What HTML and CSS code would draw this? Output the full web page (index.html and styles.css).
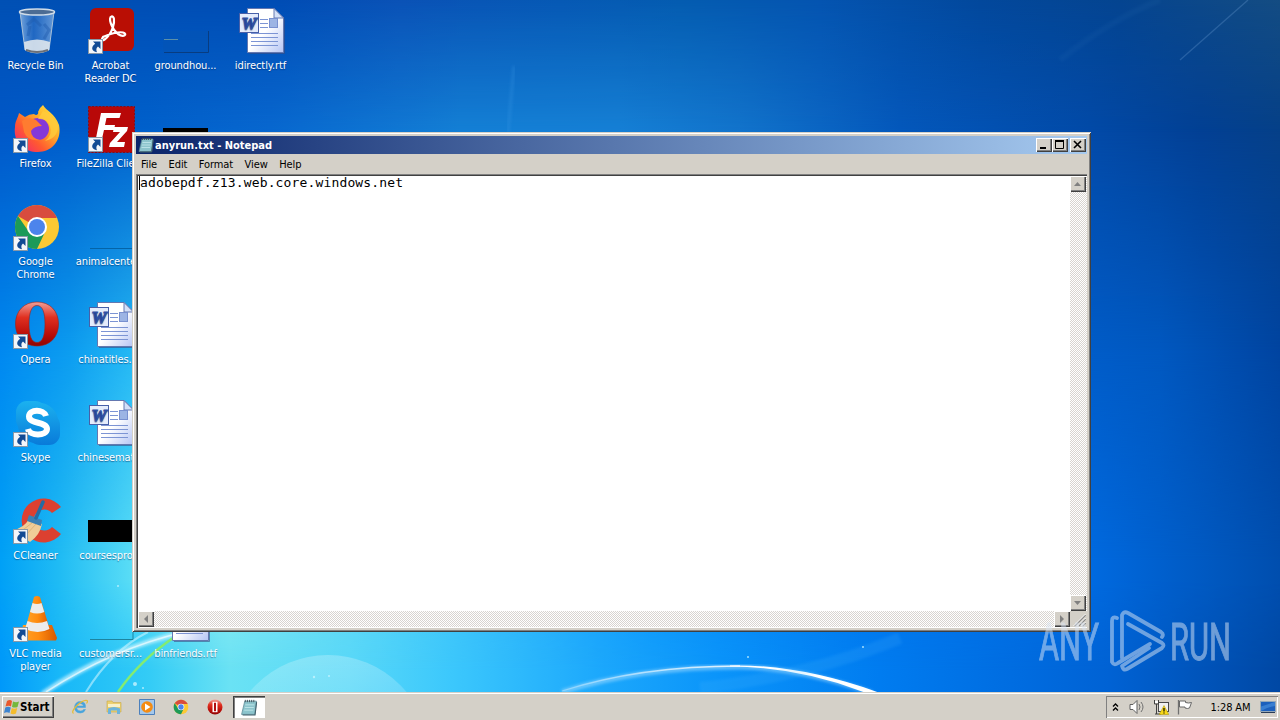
FILE: index.html
```html
<!DOCTYPE html>
<html lang="en">

<head>
  <meta charset="UTF-8">
  <meta name="viewport" content="width=device-width, initial-scale=1.0">
  <title>Desktop</title>
  <link rel="stylesheet" href="styles.css">
</head>

<body>
  <!-- shared icon shapes -->
  <svg class="defs" width="0" height="0">
    <defs>
      <linearGradient id="page" x1="0" y1="0" x2="1" y2="1">
        <stop offset=".5" stop-color="#fff" />
        <stop offset="1" stop-color="#b4c4f4" />
      </linearGradient>
      <linearGradient id="red" x1="0" y1="0" x2="0" y2="1">
        <stop offset="0" stop-color="#f0a098" />
        <stop offset=".35" stop-color="#e03020" />
        <stop offset=".75" stop-color="#b80c08" />
        <stop offset="1" stop-color="#8c0404" />
      </linearGradient>
      <linearGradient id="fox" x1="1" y1="0" x2="0" y2="1">
        <stop offset="0" stop-color="#fff04c" />
        <stop offset=".35" stop-color="#ffb028" />
        <stop offset=".65" stop-color="#ff5a30" />
        <stop offset="1" stop-color="#f01880" />
      </linearGradient>
      <linearGradient id="skype" x1="0" y1="0" x2="0" y2="48" gradientUnits="userSpaceOnUse">
        <stop offset="0" stop-color="#1cb4f0" />
        <stop offset="1" stop-color="#0878d8" />
      </linearGradient>
      <linearGradient id="glass" x1="0" y1="0" x2="1" y2="0">
        <stop offset="0" stop-color="#b8d4f0" stop-opacity=".65" />
        <stop offset=".4" stop-color="#5088d0" stop-opacity=".4" />
        <stop offset="1" stop-color="#a8c8ec" stop-opacity=".6" />
      </linearGradient>
      <linearGradient id="cone" x1="0" y1="0" x2="1" y2="0">
        <stop offset="0" stop-color="#ffa428" />
        <stop offset=".5" stop-color="#ff8c10" />
        <stop offset="1" stop-color="#d85800" />
      </linearGradient>

      <symbol id="shortcut" viewBox="0 0 15 15">
        <rect x=".5" y=".5" width="14" height="14" fill="#f4f6fa" stroke="#8898a8" />
        <path d="M5 2.500h7.500V10L10 7.500C8 9 8 11 9 13.300 3.500 12.500 2.500 8 7.200 4.800z" fill="#124a94" />
      </symbol>

      <symbol id="word" viewBox="0 0 50 48">
        <path d="M11.500 1.500H38l9.500 9.500V45.500h-36z" fill="url(#page)" stroke="#6478b0" />
        <path d="M38 1.500V11h9.500z" fill="#d4e0f8" stroke="#6478b0" />
        <path d="M48.500 12v34.500H13" fill="none" stroke="#3c4c80" opacity=".6" />
        <path d="M24 12.500h8M24 16.500h8M24 20.500h8M15 26.500h27M15 30.500h27M15 34.500h27M15 38.500h27" stroke="#7c94d4" />
        <rect x="33.500" y="11.500" width="8" height="9" fill="#9cb4e4" stroke="#7890d0" />
        <rect x="3.500" y="6.500" width="19" height="19" fill="#e4ecfc" stroke="#4860a8" />
        <text x="13" y="21.500" text-anchor="middle" textLength="15" lengthAdjust="spacingAndGlyphs" class="word-letter">W</text>
      </symbol>

      <symbol id="chrome" viewBox="0 0 48 48">
        <circle cx="24" cy="24" r="22" fill="#fcc934" />
        <path d="M24 24L4.950 13A22 22 0 0 1 43.050 13L43.700 15H24z" fill="#d84c3e" />
        <path d="M4.950 13A22 22 0 0 0 24 46L32 29 24 33 16 29z" fill="#1c9a58" />
        <circle cx="24" cy="24" r="10" fill="#fff" />
        <circle cx="24" cy="24" r="8" fill="#4c84ec" />
      </symbol>

      <symbol id="opera" viewBox="0 0 48 48">
        <path fill-rule="evenodd" fill="url(#red)" stroke="#9c2018" stroke-width=".6" d="M24 2C11 2 2.500 11 2.500 24S11 46 24 46s21.500-9 21.500-22S37 2 24 2zm0 3.500c5.500 0 8 7 8 18.500s-2.500 18.500-8 18.500-8-7-8-18.500 2.500-18.500 8-18.500z" />
      </symbol>

      <symbol id="notepad" viewBox="0 0 16 16">
        <path d="M4 2h11l-1.500 12.500H1z" fill="#8cc4cc" stroke="#5c8894" stroke-width=".7" />
        <path d="M15.200 3l-1.500 12H2" fill="none" stroke="#40606c" />
        <path d="M4.500 5.500h8.500M4 8h8.500M3.500 10.500h8.500" stroke="#c4e8ec" stroke-width=".8" />
        <path d="M4.500 3V.8M6.500 3V.8M8.500 3V.8M10.500 3V.8M12.500 3V.8" stroke="#384850" stroke-width=".8" />
      </symbol>
    </defs>
  </svg>

  <main class="desktop">
    <div class="sky sky-floor"></div>
    <div class="sky sky-low"></div>
    <div class="sky sky-mid"></div>
    <div class="sky sky-high"></div>
    <div class="sky sky-top"></div>
    <svg class="sky streaks" viewBox="0 0 1280 692">
      <defs>
        <filter id="soft"><feGaussianBlur stdDeviation="1.500" /></filter>
        <linearGradient id="dome" x1="0" y1="0" x2="0" y2="1">
          <stop offset="0" stop-color="#fff" stop-opacity=".24" />
          <stop offset=".5" stop-color="#fff" stop-opacity=".05" />
        </linearGradient>
        <linearGradient id="arc" x1="560" y1="0" x2="880" y2="0" gradientUnits="userSpaceOnUse">
          <stop offset="0" stop-color="#fff" stop-opacity=".35" />
          <stop offset=".5" stop-color="#fff" />
          <stop offset="1" stop-color="#fff" />
        </linearGradient>
      </defs>
      <circle cx="328" cy="757" r="102" fill="url(#dome)" />
      <path d="M42 694Q110 648 186 632" fill="none" stroke="#d8f8ff" stroke-width="5" filter="url(#soft)" opacity=".7" />
      <path d="M46 692Q112 649 184 632" fill="none" stroke="#fff" stroke-width="1.500" opacity=".6" />
      <path d="M86 692Q112 650 148 632" fill="none" stroke="#c8f4ff" stroke-width="2" opacity=".6" />
      <path d="M118 692Q140 660 176 636" fill="none" stroke="#84ec70" stroke-width="2.500" />
      <path d="M562 692Q640 667 740 667 800 668 872 693" fill="none" stroke="#a4dcff" stroke-width="5" filter="url(#soft)" opacity=".55" />
      <path d="M562 691Q640 666 740 666" fill="none" stroke="url(#arc)" stroke-width="1.300" opacity=".8" />
      <path d="M730 665.500Q800 664 880 693L866 693Q800 667 730 666.500z" fill="#fff" />
      <path d="M700 688Q810 676 900 638" fill="none" stroke="#5cc0ff" stroke-width="12" filter="url(#soft)" opacity=".14" />
      <path d="M1180 60L1248 0" stroke="#78a8dc" stroke-width="1.300" opacity=".28" />
      <path d="M1060 60Q1110 20 1160 0" fill="none" stroke="#3c80c0" stroke-width="6" filter="url(#soft)" opacity=".09" />
      <path d="M514 66L508 132" stroke="#3c98e4" stroke-width="3" opacity=".3" filter="url(#soft)" />
      <g fill="#c8f4ff" opacity=".8">
        <circle cx="118" cy="586" r="1" /><circle cx="135" cy="684" r="2" /><circle cx="143" cy="688" r="1" />
        <circle cx="314" cy="677" r="1.200" /><circle cx="329" cy="676" r="1" /><circle cx="748" cy="657" r="1" /><circle cx="863" cy="647" r="1" />
      </g>
    </svg>

    <div class="icons">
      <div class="icon">
        <svg viewBox="0 0 48 48">
          <path d="M8 5L13 43Q25 49 37 43L42 5z" fill="url(#glass)" stroke="#a8c0d8" />
          <path d="M12 35Q25 30 38 35L37 43Q25 48 13 43z" fill="#e8ecee" opacity=".85" />
          <path d="M14 43Q25 47 36 43" fill="none" stroke="#6c7078" stroke-width="2" />
          <path d="M15 18l7-6 7 7M32 17l5 6-5 9M18 19l-2 10" fill="none" stroke="#205cac" stroke-width="3" opacity=".45" />
          <ellipse cx="25" cy="5" rx="17.500" ry="3" fill="#4c6c94" stroke="#d0dce8" stroke-width="1.500" />
        </svg>
        <span>Recycle Bin</span>
      </div>
      <div class="icon">
        <svg viewBox="0 0 48 48">
          <rect x="3" y="1" width="44" height="43" rx="6" fill="#b90e04" />
          <path d="M16 30C12 36 21 34 26 20 28 13 27 9 24.500 9.500 21 10.500 24 21 31 27 37 31 41 27 36 25.500 31 24.500 22 27 16 30" fill="none" stroke="#fff" stroke-width="2.200" stroke-linecap="round" />
          <use href="#shortcut" x="1" y="32" width="15" height="15" />
        </svg>
        <span>Acrobat<br>Reader DC</span>
      </div>
      <div class="icon">
        <svg viewBox="0 0 48 48">
          <rect x="1" y="24" width="46" height="21" fill="#0454b4" opacity=".5" />
          <path d="M2 45.500H46.500V24" fill="none" stroke="#083c80" />
          <path d="M2 32.500h14" stroke="#5c90a8" />
        </svg>
        <span>groundhou...</span>
      </div>
      <div class="icon">
        <svg viewBox="0 0 50 48" class="doc"><use href="#word" /></svg>
        <span>idirectly.rtf</span>
      </div>

      <div class="icon">
        <svg viewBox="0 0 48 48">
          <path d="M31 0C34 6 43 8 47 20 50 34 41 47 26 47 11 47 1 37 3 22 3 16 6 13 7 8L13 12Q17 9 22 9C25 12 27 8 26 7Q27 3 31 0z" fill="url(#fox)" />
          <circle cx="26" cy="24" r="11" fill="#8438d8" />
          <path d="M10 16q7-5 14-1l6 6q-8 0-11 5 0 7 9 9-12 2-16-8z" fill="#ff7c30" />
          <path d="M26 14q9-1 12 7 3 9-5 15 13-3 13-15Q41 9 31 6z" fill="#ffcc3c" opacity=".8" />
          <use href="#shortcut" x="1" y="33" width="15" height="15" />
        </svg>
        <span>Firefox</span>
      </div>
      <div class="icon">
        <svg viewBox="0 0 48 48">
          <rect x="1.500" y="1.500" width="46" height="46" fill="#b80808" stroke="#8c0c14" stroke-dasharray="2 1.500" />
          <path d="M14 8H34L32.500 13H19.500L18 20H28L27 25H17L14 38H8z" fill="#fff" />
          <path d="M27 22H41L40 26 30 37H38L37 42H22L23 38 33 27H26z" fill="#fff" />
          <use href="#shortcut" x="1" y="32" width="15" height="15" />
        </svg>
        <span>FileZilla Client</span>
      </div>
      <div class="icon">
        <svg viewBox="0 0 48 48"><rect x="1" y="23" width="45" height="22" /></svg>
      </div>
      <div class="icon"></div>

      <div class="icon">
        <svg viewBox="0 0 48 48">
          <use href="#chrome" x="1" width="48" height="48" />
          <use href="#shortcut" x="1" y="33" width="15" height="15" />
        </svg>
        <span>Google<br>Chrome</span>
      </div>
      <div class="icon">
        <svg viewBox="0 0 48 48"><path d="M3 45.500h44" stroke="#0464a8" /></svg>
        <span>animalcente...</span>
      </div>
      <div class="icon"></div>
      <div class="icon"></div>

      <div class="icon">
        <svg viewBox="0 0 48 48">
          <use href="#opera" x="1" y="-1" width="48" height="48" />
          <use href="#shortcut" x="1" y="33" width="15" height="15" />
        </svg>
        <span>Opera</span>
      </div>
      <div class="icon">
        <svg viewBox="0 0 50 48" class="doc"><use href="#word" /></svg>
        <span>chinatitles.rtf</span>
      </div>
      <div class="icon"></div>
      <div class="icon"></div>

      <div class="icon">
        <svg viewBox="0 0 48 48">
          <rect x="4" y="2" width="30" height="30" rx="11" fill="url(#skype)" />
          <rect x="17" y="15" width="31" height="31" rx="11" fill="url(#skype)" />
          <circle cx="26" cy="24" r="20.500" fill="url(#skype)" />
          <path d="M34 17C32 10 17 10 17 17.500 17 25.500 35 22 35 30 34.500 37 18 37.500 16 30" fill="none" stroke="#fff" stroke-width="6" />
          <use href="#shortcut" x="1" y="33" width="15" height="15" />
        </svg>
        <span>Skype</span>
      </div>
      <div class="icon">
        <svg viewBox="0 0 50 48" class="doc"><use href="#word" /></svg>
        <span>chinesemat...</span>
      </div>
      <div class="icon"></div>
      <div class="icon"></div>

      <div class="icon">
        <svg viewBox="0 0 50 48" class="wide">
          <path d="M49 10A22 22 0 1 0 49 37L40 30A10.500 10.500 0 1 1 40 16z" fill="#dc4030" />
          <path d="M1 33Q12 31 17 22L30 27Q28 38 18 45z" fill="#f0cc98" />
          <path d="M8 35l12-9M13 39l11-12" stroke="#e0b478" />
          <path d="M17 18l13 5-1 6-14-5z" fill="#3c80b4" />
          <path d="M24 21L31 5" stroke="#246ca4" stroke-width="3.500" stroke-linecap="round" />
          <use href="#shortcut" x="1" y="32" width="15" height="15" />
        </svg>
        <span>CCleaner</span>
      </div>
      <div class="icon">
        <svg viewBox="0 0 48 48"><rect x="1" y="23" width="47" height="22" /></svg>
        <span>coursespro...</span>
      </div>
      <div class="icon"></div>
      <div class="icon"></div>

      <div class="icon">
        <svg viewBox="0 0 48 48">
          <path d="M11 30H40L45 43 44 45.500H8z" fill="url(#cone)" />
          <path d="M22 2Q25 0 28 2L38 35Q26 41 13 35z" fill="url(#cone)" />
          <path d="M20.500 8Q25 10 29.500 8L32.300 17Q25 20 18 17zM15.500 26Q25 30 35 26L37.500 34Q26 40 13 34z" fill="#ececec" />
          <use href="#shortcut" x="1" y="32" width="15" height="15" />
        </svg>
        <span>VLC media<br>player</span>
      </div>
      <div class="icon">
        <svg viewBox="0 0 48 48"><path d="M3 44.500h43V34" fill="none" stroke="#1c84a0" /></svg>
        <span>customersr...</span>
      </div>
      <div class="icon">
        <svg viewBox="0 0 50 48" class="doc"><use href="#word" /></svg>
        <span>binfriends.rtf</span>
      </div>
    </div>

    <section class="window">
      <div class="titlebar">
        <svg class="title-icon" viewBox="0 0 16 16"><use href="#notepad" /></svg>
        <h1>anyrun.txt - Notepad</h1>
        <div class="controls">
          <button class="btn"><svg viewBox="0 0 12 10"><path d="M2 8h6" stroke="#000" stroke-width="2" /></svg></button>
          <button class="btn"><svg viewBox="0 0 12 10"><path d="M1.500 1v7.500h8V1M1 1h9" fill="none" stroke="#000" /><path d="M1 1h9" stroke="#000" stroke-width="2" /></svg></button>
          <button class="btn close"><svg viewBox="0 0 12 10"><path d="M2 1l7 7M9 1L2 8" stroke="#000" stroke-width="1.600" /></svg></button>
        </div>
      </div>
      <nav class="menubar">
        <span>File</span><span>Edit</span><span>Format</span><span>View</span><span>Help</span>
      </nav>
      <div class="editor">
        <div class="text">adobepdf.z13.web.core.windows.net</div>
        <div class="scroll scroll-v">
          <button class="btn"><svg viewBox="0 0 12 12"><path d="M2 8l3.500-4L9 8z" /></svg></button>
          <button class="btn"><svg viewBox="0 0 12 12"><path d="M2 4h7L5.500 8z" /></svg></button>
        </div>
        <div class="scroll scroll-h">
          <button class="btn"><svg viewBox="0 0 12 12"><path d="M8 2v8L4 6z" /></svg></button>
          <button class="btn"><svg viewBox="0 0 12 12"><path d="M4 2v8l4-4z" /></svg></button>
        </div>
        <svg class="grip" viewBox="0 0 16 16"><path d="M4 15L15 4M8 15l7-7M12 15l3-3" stroke="#808080" stroke-width="1.500" /><path d="M3 15L15 3M7 15l8-8M11 15l4-4" stroke="#fff" /></svg>
      </div>
    </section>

    <svg class="watermark" viewBox="0 0 200 70">
      <text transform="translate(3 54) scale(1 2.050)" textLength="60" lengthAdjust="spacingAndGlyphs">ANY</text>
      <g fill="none" stroke-width="3.800" stroke-linejoin="round" stroke-linecap="round">
        <path d="M81 12Q76 10 76 15V56Q78 60 82 57L114 38" />
        <path d="M86 52V9Q88 5 92 7L125 26Q128 28 126 31" />
        <path d="M92 18L126 37Q129 39 126 42L91 63Q87 65 86 60L113 42" />
      </g>
      <text transform="translate(134 54) scale(1 2.050)" textLength="61" lengthAdjust="spacingAndGlyphs">RUN</text>
    </svg>
  </main>

  <footer class="taskbar">
    <button class="btn start">
      <svg viewBox="0 0 16 16">
        <path d="M3 2Q6 0 8 2L7 7.500Q5 6 1.500 7.500z" fill="#e8582c" />
        <path d="M9 2.500Q12 4 15 2.500L13.500 8Q11 9 8 8z" fill="#74b83c" />
        <path d="M1.300 8.500Q4 7 6.800 8.500L5.500 14Q3 12.500 0 14z" fill="#3c84d0" />
        <path d="M7.800 9Q10 10.500 13.200 9L12 14.500Q9 16 6.500 14.500z" fill="#f4bc2c" />
      </svg>Start
    </button>
    <div class="quick">
      <svg viewBox="0 0 16 16">
        <path d="M13.500 8.500H4.500Q5 12 8.500 12q2 0 3-1.500H13.500Q12 14 8.500 14 2.700 14 2.500 8.200 3 2.500 8.500 2.500T13.500 8.500zM4.700 7H11.500Q11 4.500 8.200 4.500T4.700 7z" fill="#48a4dc" stroke="#48a4dc" stroke-width=".5" />
        <path d="M1.500 14.500Q-1 13 4 7.500 11 .5 15 1.500q1 1-.5 3" fill="none" stroke="#e4bc38" stroke-width="1.200" />
      </svg>
      <svg viewBox="0 0 16 16">
        <path d="M1 2h5l1 1.500h8V13H1z" fill="#ecd070" stroke="#c8a848" stroke-width=".6" />
        <path d="M2 5h12v3H2z" fill="#f8f0c8" />
        <path d="M2 15V9.500Q8 6.500 14 9.500V15h-3v-3.500H5V15z" fill="#6cb4dc" />
      </svg>
      <svg viewBox="0 0 16 16">
        <path d="M.5.500h15v15H.5z" fill="#a4c8ec" stroke="#4c80bc" />
        <circle cx="8" cy="8" r="5.800" fill="#f48c14" />
        <path d="M6 4.500v7L11.500 8z" fill="#fff" />
      </svg>
      <svg viewBox="0 0 48 48"><use href="#chrome" /></svg>
      <svg viewBox="0 0 16 16">
        <circle cx="8" cy="8" r="7.500" fill="url(#red)" />
        <path d="M5.500 2.800h5v10.400h-5z" fill="#fff" /><path d="M7 3.800h2v8.400H7z" fill="#b01010" />
      </svg>
    </div>
    <div class="task"><svg viewBox="0 0 16 16"><use href="#notepad" /></svg></div>
    <div class="tray">
      <svg class="chevrons" viewBox="0 0 7 9"><path d="M1 4l2.500-2.500L6 4M1 8l2.500-2.500L6 8" fill="none" stroke="#000" stroke-width="1.300" /></svg>
      <svg viewBox="0 0 16 16"><path d="M1 5.500h3l4-4v13l-4-4H1z" fill="#fff" stroke="#606060" /><path d="M10 5q2 3 0 6M12 3q4 5 0 10" fill="none" stroke="#707070" /></svg>
      <svg viewBox="0 0 16 16">
        <rect x="5.500" y="3.500" width="10" height="9" fill="#f0f0f0" stroke="#484848" />
        <path d="M1.500 1v4h4V1M3.500 5v10M2 15h6" fill="none" stroke="#404040" /><path d="M2 2h3v2H2z" fill="#fff" />
        <path d="M11 6.500L15.800 15.500H6.200z" fill="#f8d818" stroke="#a89000" stroke-width=".5" /><path d="M11 9v3.500M11 13.500v1" stroke="#000" stroke-width="1.200" />
      </svg>
      <svg viewBox="0 0 16 16"><path d="M1.500 1v14.500" stroke="#707070" stroke-width="1.300" /><path d="M2.500 2h6v1.500q3 1 6 0L12.500 9q-2 1-4.500 0V8H2.500z" fill="#fff" stroke="#686868" /></svg>
      <time>1:28 AM</time>
      <svg class="show-desktop" viewBox="0 0 16 16"><rect x=".5" y="2.500" width="15" height="10" fill="#1c60bc" stroke="#94a8b8" /><path d="M1 7.500L15 3v4Q8 8 1 12z" fill="#4c94e0" opacity=".6" /><path d="M1 13.500h14" stroke="#283c58" /></svg>
    </div>
  </footer>
</body>

</html>
```
FILE: styles.css
```css
* {
  box-sizing: border-box;
  margin: 0;
  padding: 0;
}

body {
  width: 1280px;
  height: 720px;
  overflow: hidden;
  display: flex;
  flex-direction: column;
  font-family: "DejaVu Sans Condensed", "DejaVu Sans", sans-serif;
  font-stretch: condensed;
  font-size: 11px;
  color: #000;
}

svg {
  display: block;
  flex: none;
}

.defs {
  position: absolute;
}

.desktop {
  position: relative;
  flex: 1;
  overflow: hidden;
}

/* wallpaper: horizontal colour bands that fade into the one below */
.sky {
  position: absolute;
  inset: 0;
}

.sky-floor {
  background: linear-gradient(90deg, #0098fa 0, #18b8f8 60px, #34ccf6 150px, #6ae2f4 230px, #58d8f8 350px, #3cc8fc 450px, #1ca8fc 600px, #0a94fa 720px, #007cf0 880px, #006ce0 1020px, #0062d4 1110px, #0048a4 1280px);
}

.sky-low {
  background: linear-gradient(90deg, #00a0f6 0, #20bcf4 60px, #58dcf6 130px, #8cecf2 220px, #50d0f8 400px, #0c98fc 650px, #0078f0 850px, #006ae0 1090px, #004eae 1280px);
  mask-image: linear-gradient(#000 580px, transparent 670px);
}

.sky-mid {
  background: linear-gradient(90deg, #0088f0 0, #0c9cf0 70px, #24b8f4 133px, #2cb4f4 600px, #005cc8 1090px, #0058c0 1160px, #0044a0 1280px);
  mask-image: linear-gradient(#000 350px, transparent 560px);
}

.sky-high {
  background: linear-gradient(90deg, #0058c8 0, #0060cc 130px, #0868d0 270px, #1480d6 460px, #1680d6 620px, #1274cc 740px, #0458bc 900px, #024aa8 1090px, #024094 1200px, #054088 1280px);
  mask-image: linear-gradient(#000 132px, transparent 350px);
}

.sky-top {
  background: linear-gradient(90deg, #0050b4 0, #004cb4 280px, #0a52b6 400px, #0658b4 560px, #045cb0 680px, #0454b0 820px, #02489c 980px, #044490 1120px, #144c82 1280px);
  mask-image: linear-gradient(#000, transparent 132px);
}

.streaks {
  width: 1280px;
  height: 692px;
}

.icons {
  position: relative;
  display: grid;
  grid-template-columns: repeat(4, 75px);
  grid-auto-rows: 98px;
  margin-left: -2px;
}

.icon {
  display: flex;
  flex-direction: column;
  align-items: center;
  padding-top: 7px;
  color: #fff;
  line-height: 13px;
  letter-spacing: -0.1px;
  text-align: center;
  white-space: nowrap;
  text-shadow: 0 1px 1px rgba(0, 30, 80, 0.5);
}

.icon svg {
  width: 48px;
  height: 48px;
  margin-bottom: 4px;
}

.icon .doc {
  width: 50px;
}

.icon .wide {
  width: 50px;
  margin-left: 2px;
}

.word-letter {
  font: bold italic 16px "Liberation Serif", serif;
  fill: #3050a4;
  stroke: #3050a4;
}

/* raised 3D button */
.btn {
  display: flex;
  align-items: center;
  justify-content: center;
  width: 16px;
  height: 16px;
  border: 0;
  background: #d4d0c8;
  box-shadow: inset 1px 1px #fff, inset -1px -1px #404040, inset -2px -2px #808080;
}

.window {
  position: absolute;
  left: 132px;
  top: 132px;
  width: 959px;
  height: 500px;
  display: flex;
  flex-direction: column;
  padding: 4px;
  background: #d4d0c8;
  box-shadow: inset 1px 1px #d4d0c8, inset -1px -1px #404040, inset 2px 2px #fff, inset -2px -2px #808080;
}

.titlebar {
  flex: none;
  display: flex;
  align-items: center;
  height: 18px;
  padding: 0 1px 0 2px;
  background: linear-gradient(90deg, #0a246a, #a6caf0);
}

.title-icon {
  width: 16px;
  height: 16px;
}

.titlebar h1 {
  flex: 1;
  margin-left: 1px;
  padding-top: 1px;
  font-size: 11px;
  line-height: 18px;
  color: #fff;
}

.controls {
  display: flex;
}

.controls .btn {
  height: 14px;
}

.controls svg {
  width: 12px;
  height: 10px;
}

.controls .close {
  margin-left: 2px;
}

.menubar {
  flex: none;
  display: flex;
  gap: 11.5px;
  height: 20px;
  padding-left: 5px;
  line-height: 21px;
  letter-spacing: -0.1px;
}

.editor {
  flex: 1;
  display: grid;
  grid-template-columns: 1fr 17px;
  grid-template-rows: 1fr 16px;
  padding: 2px 0 1px 2px;
  background: #fff;
  box-shadow: inset 1px 1px #808080, inset 2px 2px #404040;
}

.text {
  align-self: start;
  justify-self: start;
  height: 14px;
  margin-left: 1px;
  border-left: 1px solid #000;
  font: 13px/14px "DejaVu Sans Mono", monospace;
  letter-spacing: 0.15px;
}

.scroll {
  display: flex;
  justify-content: space-between;
  background: repeating-conic-gradient(#d8d4d0 0 25%, #fff 0 50%) 0 0 / 2px 2px;
}

.scroll-v {
  flex-direction: column;
}

.scroll svg {
  width: 12px;
  height: 12px;
  fill: #808080;
}

.grip {
  width: 17px;
  height: 16px;
  background: #d4d0c8;
}

.watermark {
  position: absolute;
  left: 1036px;
  top: 606px;
  width: 200px;
  height: 70px;
  opacity: 0.5;
  fill: #dce6f4;
  stroke: #dce6f4;
}

.watermark text {
  font: 25px Roboto, sans-serif;
  stroke-width: 0.5px;
}

.taskbar {
  flex: none;
  display: flex;
  align-items: center;
  height: 28px;
  padding: 4px 2px 2px;
  background: #d4d0c8;
  box-shadow: inset 0 1px #d4d0c8, inset 0 2px #fff;
}

.start {
  justify-content: flex-start;
  width: 52px;
  height: 22px;
  padding-left: 2px;
  font: bold 11.5px "DejaVu Sans Condensed", sans-serif;
}

.start svg {
  width: 16px;
  height: 16px;
}

.quick {
  display: flex;
  gap: 17.7px;
  margin-left: 18px;
}

.quick svg {
  width: 16px;
  height: 16px;
}

.task {
  display: flex;
  align-items: center;
  justify-content: center;
  width: 32px;
  height: 22px;
  margin-left: 10px;
  background: #fff;
  box-shadow: inset 1px 1px #404040, inset 2px 2px #808080, inset -1px -1px #fff;
}

.task svg {
  width: 18px;
  height: 17px;
}

.tray {
  display: flex;
  align-items: center;
  width: 172px;
  height: 22px;
  margin-left: auto;
  padding-left: 6px;
  box-shadow: inset 1px 1px #808080, inset -1px -1px #fff;
}

.tray svg {
  width: 16px;
  height: 16px;
  margin-right: 8px;
}

.tray .chevrons {
  width: 7px;
  height: 10px;
  margin-right: 10px;
}

.tray time {
  flex: 1;
  text-align: center;
  white-space: nowrap;
  letter-spacing: -0.1px;
}

.tray .show-desktop {
  margin: 0 2px 0 0;
}
```
